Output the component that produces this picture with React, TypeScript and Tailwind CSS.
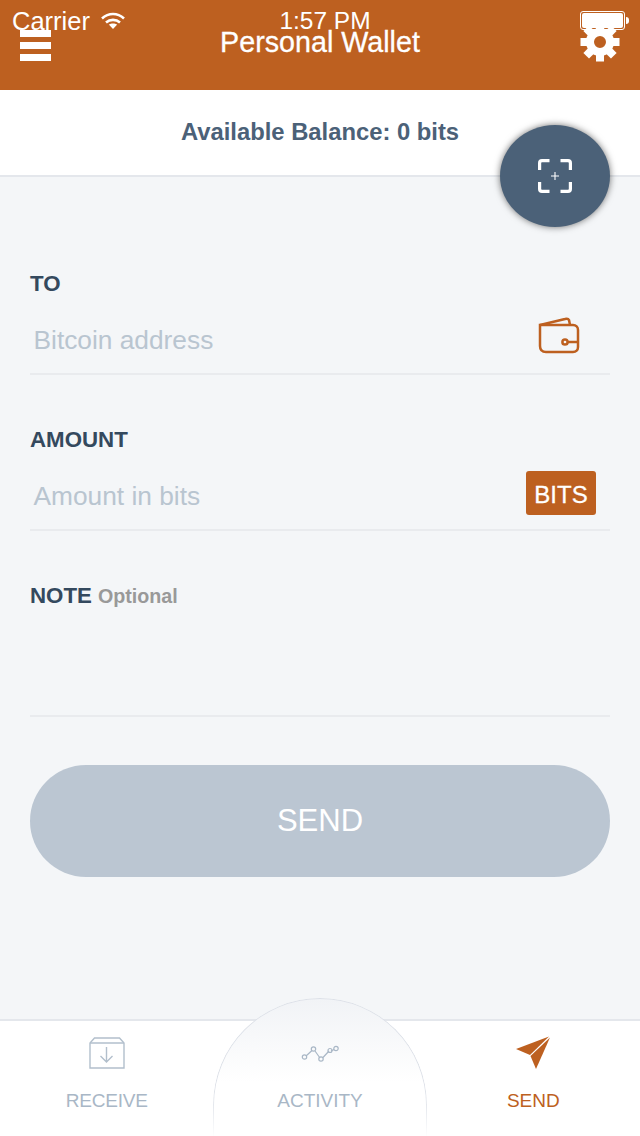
const SANS = 'font-["Liberation_Sans",Arial,sans-serif]';

function Gear() {
  const teeth = [0, 45, 90, 135, 180, 225, 270, 315];
  return (
    <svg width="40" height="40" viewBox="0 0 40 40">
      <g fill="#fff">
        {teeth.map((a) => (
          <rect key={a} x="16" y="0.5" width="8" height="9" transform={`rotate(${a} 20 20)`} />
        ))}
      </g>
      <circle cx="20" cy="20" r="10" fill="none" stroke="#fff" strokeWidth="8" />
    </svg>
  );
}

function StatusBar() {
  return (
    <div className={`absolute top-0 left-0 w-full h-10 text-white ${SANS}`}>
      <span className="absolute left-[12px] top-[7px] text-[25.5px] leading-[28px] font-light">Carrier</span>
      <svg className="absolute left-[100px] top-[11px]" width="26" height="19" viewBox="0 0 26 19" fill="none" stroke="#fff" strokeWidth="2.6">
        <path d="M2 7.5C8.5 1.5 17.5 1.5 24 7.5" />
        <path d="M6 11.5C10 8 16 8 20 11.5" />
        <path d="M13 18 L8.8 13.6C11 12 15 12 17.2 13.6Z" fill="#fff" stroke="none" />
      </svg>
      <span className="absolute left-[10px] right-0 top-[7px] text-center text-[24.5px] leading-[28px]">1:57 PM</span>
      <div className="absolute left-[580px] top-[11px] w-[45px] h-[19px] rounded-[3px] border border-white p-[1px]">
        <div className="w-full h-full bg-white rounded-[2px]" />
      </div>
      <div className="absolute left-[626px] top-[17px] w-[3px] h-[7px] bg-white rounded-r-sm" />
    </div>
  );
}

function Field({ label, extra, placeholder, right, height }: { label: string; extra?: string; placeholder?: string; right?: React.ReactNode; height: string }) {
  return (
    <div className={`border-b-2 border-[#e9ebee] ${height}`}>
      <div className="text-[22.3px] leading-[28px] font-bold text-[#34495e]">
        {label}
        {extra && <span className="text-[19.7px] text-[#999] ml-[6px]">{extra}</span>}
      </div>
      {placeholder && (
        <div className="flex items-center justify-between h-[44px] mt-[20px] pl-[3.5px]">
          <span className="text-[26.3px] text-[#b9c5d0] leading-[44px]">{placeholder}</span>
          {right}
        </div>
      )}
    </div>
  );
}

export default function App() {
  return (
    <div className={`relative w-[640px] h-[1136px] flex flex-col overflow-hidden bg-[#f4f6f8] ${SANS}`}>
      <header className="relative h-[90px] bg-[#bd6020] flex items-start justify-between pl-[20px] pr-[20px] text-white">
        <div className="w-[31px] mt-[30px] flex flex-col gap-[5px]">
          <div className="h-[7px] bg-white" />
          <div className="h-[7px] bg-white" />
          <div className="h-[7px] bg-white" />
        </div>
        <span className="absolute left-0 right-0 top-[24px] text-center text-[28.7px] leading-[36px] [-webkit-text-stroke:0.3px_white]">Personal Wallet</span>
        <div className="mt-[22px]"><Gear /></div>
      </header>

      <div className="h-[87px] pb-[2px] bg-white border-b-2 border-[#e4e7ec] flex items-center justify-center">
        <span className="text-[23.8px] font-bold text-[#4b6178]">Available Balance: 0 bits</span>
      </div>

      <main className="flex-1 px-[30px] pt-[93px]">
        <Field
          label="TO"
          placeholder="Bitcoin address"
          height="h-[105px]"
          right={
            <svg className="mr-[30px] -mt-[9px]" width="42" height="37" viewBox="0 0 42 37" fill="none" stroke="#bd6020" strokeWidth="2.5">
              <path d="M2 8H35C38 8 40 10 40 13V30C40 33 38 35 35 35H8C4.5 35 2 33 2 29Z" />
              <path d="M2 8L27 2Q30 1 31 3L32 8" />
              <path d="M30 25H40" />
              <circle cx="27" cy="25" r="2.6" />
            </svg>
          }
        />
        <div className="h-[51px]" />
        <Field
          label="AMOUNT"
          placeholder="Amount in bits"
          height="h-[105px]"
          right={
            <div className="w-[70px] h-[44px] pt-[4px] mr-[14px] -mt-[7px] rounded-[3px] bg-[#bd6020] text-white text-[24px] [-webkit-text-stroke:0.3px_white] flex items-center justify-center">BITS</div>
          }
        />
        <div className="h-[51px]" />
        <Field label="NOTE" extra="Optional" height="h-[135px]" />
        <button className="w-full h-[112px] mt-[48px] rounded-full bg-[#bbc6d2] text-white text-[31px]">SEND</button>
      </main>

      <footer className="h-[117px] bg-white border-t-2 border-[#e4e7ec] grid grid-cols-3 text-[19px]">
        <div className="flex flex-col items-center pt-[16px] text-[#a9b7c6]">
          <svg width="36" height="32" viewBox="0 0 36 32" fill="none" stroke="#b2bfcc" strokeWidth="1.4">
            <path d="M1 31V6L5.5 1H30.5L35 6V31Z" />
            <path d="M1 6H35" />
            <path d="M17.5 10V25M11.5 19L17.5 25L23.5 19" />
          </svg>
          <span className="mt-[21px] leading-[22px] tracking-[-0.2px]">RECEIVE</span>
        </div>
        <div className="relative flex flex-col items-center pt-[23px] text-[#a9b7c6]">
          <div className="absolute left-0 -top-[23px] w-[214px] h-[140px] rounded-t-[107px] border border-b-0 border-[#dde1e8] bg-gradient-to-b from-[#f1f3f6] to-white to-60% [mask-image:linear-gradient(to_bottom,black_70%,transparent)]" />
          <svg className="relative" width="38" height="20" viewBox="0 0 38 20" fill="none" stroke="#a9b7c6" strokeWidth="1.2">
            <path d="M5 12L11 6.5M14 7L19 14M22 13.5L28 7M30 7L33 5.5" />
            <circle cx="3.5" cy="13" r="2.2" />
            <circle cx="12.5" cy="5" r="2.2" />
            <circle cx="20" cy="15" r="2.2" />
            <circle cx="29" cy="6.5" r="2" />
            <circle cx="35" cy="4.5" r="2.2" />
          </svg>
          <span className="relative mt-[26px] leading-[22px]">ACTIVITY</span>
        </div>
        <div className="flex flex-col items-center pt-[15px] text-[#bd6020]">
          <svg width="35" height="34" viewBox="0 0 35 34" fill="#bd6020">
            <path d="M0 13L33 0.5L14 19Z" />
            <path d="M34 1.5L20 33L14.5 20Z" />
          </svg>
          <span className="mt-[20px] leading-[22px]">SEND</span>
        </div>
      </footer>

      <button className="absolute left-[500px] top-[125px] w-[110px] h-[102px] rounded-[50%] bg-[#4b6178] shadow-[0_0_7px_rgba(0,0,0,0.55)] flex items-center justify-center">
        <svg width="34" height="34" viewBox="0 0 34 34" fill="none" stroke="#fff" strokeWidth="3.2">
          <path d="M1.6 11V4Q1.6 1.6 4 1.6H11.5M22.5 1.6H30Q32.4 1.6 32.4 4V11M32.4 23V30Q32.4 32.4 30 32.4H22.5M11.5 32.4H4Q1.6 32.4 1.6 30V23" />
          <path d="M17 13V21M13 17H21" strokeWidth="1.1" />
        </svg>
      </button>

      <StatusBar />
    </div>
  );
}
